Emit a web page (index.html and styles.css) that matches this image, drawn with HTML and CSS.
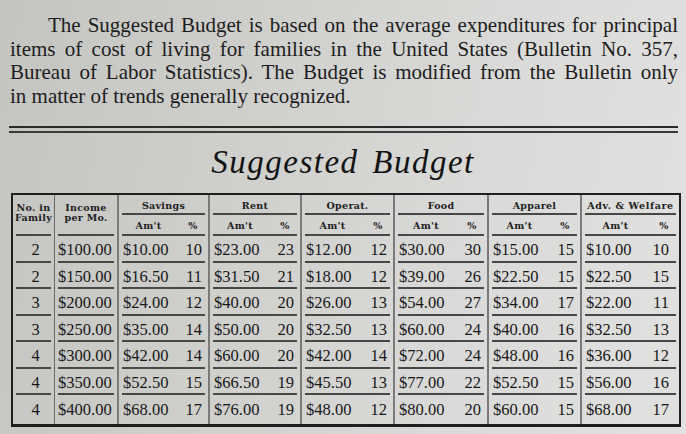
FILE: index.html
```html
<!DOCTYPE html>
<html lang="en">
<head>
<meta charset="utf-8">
<title>Suggested Budget</title>
<link rel="stylesheet" href="styles.css">
</head>
<body>
<main class="page">
  <p class="intro">
    <span class="line first">The Suggested Budget is based on the average expenditures for principal</span>
    <span class="line">items of cost of living for families in the United States (Bulletin No. 357,</span>
    <span class="line">Bureau of Labor Statistics). The Budget is modified from the Bulletin only</span>
    <span class="line last">in matter of trends generally recognized.</span>
  </p>
  <div class="rule"></div>
  <h1 class="title">Suggested Budget</h1>

  <div class="budget">
    <div class="c h h-two lb">No. in<br>Family</div>
    <div class="c h h-two s1 lb">Income<br>per Mo.</div>
    <div class="c h grp g lb">Savings</div>
    <div class="c h grp g lb">Rent</div>
    <div class="c h grp g lb">Operat.</div>
    <div class="c h grp g lb">Food</div>
    <div class="c h grp g lb">Apparel</div>
    <div class="c h grp g lb adv">Adv. &amp; Welfare</div>

    <div class="c h sub g lf">Am't</div><div class="c h sub lr">%</div>
    <div class="c h sub g lf">Am't</div><div class="c h sub lr">%</div>
    <div class="c h sub g lf">Am't</div><div class="c h sub lr">%</div>
    <div class="c h sub g lf">Am't</div><div class="c h sub lr">%</div>
    <div class="c h sub g lf">Am't</div><div class="c h sub lr">%</div>
    <div class="c h sub g lf">Am't</div><div class="c h sub lr">%</div>

    <div class="c d no lb">2</div><div class="c d inc s1 lb">$100.00</div>
    <div class="c d amt g lf">$10.00</div><div class="c d pct lr">10</div>
    <div class="c d amt g lf">$23.00</div><div class="c d pct lr">23</div>
    <div class="c d amt g lf">$12.00</div><div class="c d pct lr">12</div>
    <div class="c d amt g lf">$30.00</div><div class="c d pct lr">30</div>
    <div class="c d amt g lf">$15.00</div><div class="c d pct lr">15</div>
    <div class="c d amt g lf">$10.00</div><div class="c d pct last-col lr">10</div>

    <div class="c d no lb">2</div><div class="c d inc s1 lb">$150.00</div>
    <div class="c d amt g lf">$16.50</div><div class="c d pct lr">11</div>
    <div class="c d amt g lf">$31.50</div><div class="c d pct lr">21</div>
    <div class="c d amt g lf">$18.00</div><div class="c d pct lr">12</div>
    <div class="c d amt g lf">$39.00</div><div class="c d pct lr">26</div>
    <div class="c d amt g lf">$22.50</div><div class="c d pct lr">15</div>
    <div class="c d amt g lf">$22.50</div><div class="c d pct last-col lr">15</div>

    <div class="c d no lb">3</div><div class="c d inc s1 lb">$200.00</div>
    <div class="c d amt g lf">$24.00</div><div class="c d pct lr">12</div>
    <div class="c d amt g lf">$40.00</div><div class="c d pct lr">20</div>
    <div class="c d amt g lf">$26.00</div><div class="c d pct lr">13</div>
    <div class="c d amt g lf">$54.00</div><div class="c d pct lr">27</div>
    <div class="c d amt g lf">$34.00</div><div class="c d pct lr">17</div>
    <div class="c d amt g lf">$22.00</div><div class="c d pct last-col lr">11</div>

    <div class="c d no lb">3</div><div class="c d inc s1 lb">$250.00</div>
    <div class="c d amt g lf">$35.00</div><div class="c d pct lr">14</div>
    <div class="c d amt g lf">$50.00</div><div class="c d pct lr">20</div>
    <div class="c d amt g lf">$32.50</div><div class="c d pct lr">13</div>
    <div class="c d amt g lf">$60.00</div><div class="c d pct lr">24</div>
    <div class="c d amt g lf">$40.00</div><div class="c d pct lr">16</div>
    <div class="c d amt g lf">$32.50</div><div class="c d pct last-col lr">13</div>

    <div class="c d no lb">4</div><div class="c d inc s1 lb">$300.00</div>
    <div class="c d amt g lf">$42.00</div><div class="c d pct lr">14</div>
    <div class="c d amt g lf">$60.00</div><div class="c d pct lr">20</div>
    <div class="c d amt g lf">$42.00</div><div class="c d pct lr">14</div>
    <div class="c d amt g lf">$72.00</div><div class="c d pct lr">24</div>
    <div class="c d amt g lf">$48.00</div><div class="c d pct lr">16</div>
    <div class="c d amt g lf">$36.00</div><div class="c d pct last-col lr">12</div>

    <div class="c d no lb">4</div><div class="c d inc s1 lb">$350.00</div>
    <div class="c d amt g lf">$52.50</div><div class="c d pct lr">15</div>
    <div class="c d amt g lf">$66.50</div><div class="c d pct lr">19</div>
    <div class="c d amt g lf">$45.50</div><div class="c d pct lr">13</div>
    <div class="c d amt g lf">$77.00</div><div class="c d pct lr">22</div>
    <div class="c d amt g lf">$52.50</div><div class="c d pct lr">15</div>
    <div class="c d amt g lf">$56.00</div><div class="c d pct last-col lr">16</div>

    <div class="c d no">4</div><div class="c d inc s1">$400.00</div>
    <div class="c d amt g">$68.00</div><div class="c d pct">17</div>
    <div class="c d amt g">$76.00</div><div class="c d pct">19</div>
    <div class="c d amt g">$48.00</div><div class="c d pct">12</div>
    <div class="c d amt g">$80.00</div><div class="c d pct">20</div>
    <div class="c d amt g">$60.00</div><div class="c d pct">15</div>
    <div class="c d amt g">$68.00</div><div class="c d pct last-col">17</div>
  </div>
</main>
</body>
</html>
```

FILE: styles.css
```css
html, body {
  margin: 0;
  padding: 0;
}

body {
  width: 686px;
  height: 434px;
  overflow: hidden;
  color: #1d1d1d;
  background: linear-gradient(100deg, #c4c4c0 0%, #cfcfcc 35%, #d9d9d7 65%, #e1e1df 100%);
  font-family: "Liberation Serif", "Times New Roman", serif;
}

.page {
  padding-top: 14px;
}

.intro {
  margin: 0;
  padding: 0 8px 0 10px;
  font-size: 21px;
  line-height: 23.5px;
}

.line {
  display: block;
  text-align: justify;
  text-align-last: justify;
}

.line.first {
  text-indent: 38px;
}

.line.last {
  text-align: left;
  text-align-last: left;
}

.rule {
  margin: 18px 8px 0 9px;
  height: 3px;
  border-top: 2px solid #2a2a2a;
  border-bottom: 2px solid #3a3a3a;
}

.title {
  margin: 9px 0 0;
  font-size: 33px;
  line-height: 40px;
  font-style: italic;
  font-weight: normal;
  text-align: center;
  letter-spacing: 1.5px;
  word-spacing: 4px;
  color: #121212;
}

.budget {
  --line: #474747;
  --sep: #7a7a7a;
  display: grid;
  grid-template-columns: 41px 63px 61px 30px 62px 30px 63px 30px 64px 30px 63px 30px 69px 30px;
  grid-template-rows: 20px 21px 27px 26px 27px 26px 27px 26px 29px;
  width: max-content;
  margin: 11px 0 0 11px;
  border: 2px solid #1e1e1e;
  border-bottom-width: 3px;
}

.c {
  box-sizing: border-box;
  display: flex;
  align-items: center;
  background-repeat: no-repeat;
  background-image: linear-gradient(var(--line), var(--line));
  background-size: 0 0;
}

/* bottom rules, inset at the vertical separators */
.lb {
  background-size: calc(100% - 6px) 2px;
  background-position: center bottom;
}
.lf {
  background-size: calc(100% - 3px) 2px;
  background-position: right bottom;
}
.lr {
  background-size: calc(100% - 3px) 2px;
  background-position: left bottom;
}

.g {
  border-left: 2px solid var(--sep);
}
.s1 {
  border-left: 1px solid #6a6a6a;
}

/* header */
.h {
  font-family: "DejaVu Serif", "Liberation Serif", serif;
  font-weight: bold;
  font-size: 9.5px;
  line-height: 10px;
  letter-spacing: 0.3px;
  justify-content: center;
  text-align: center;
  color: #202020;
}

.h-two {
  grid-row: 1 / 3;
  align-items: flex-start;
  padding-top: 8px;
}

.grp {
  grid-column: span 2;
  padding-top: 2px;
}

.adv {
  letter-spacing: 0.6px;
}

.sub {
  padding-top: 1px;
}

/* data */
.d {
  font-size: 16.5px;
  color: #181818;
  padding-top: 1px;
}

.no {
  justify-content: center;
  padding-left: 4px;
}

.inc {
  padding-left: 3px;
}

.amt {
  padding-left: 4px;
}

.pct {
  justify-content: flex-end;
  padding-right: 6px;
}

.pct.last-col {
  padding-right: 10px;
}
```
